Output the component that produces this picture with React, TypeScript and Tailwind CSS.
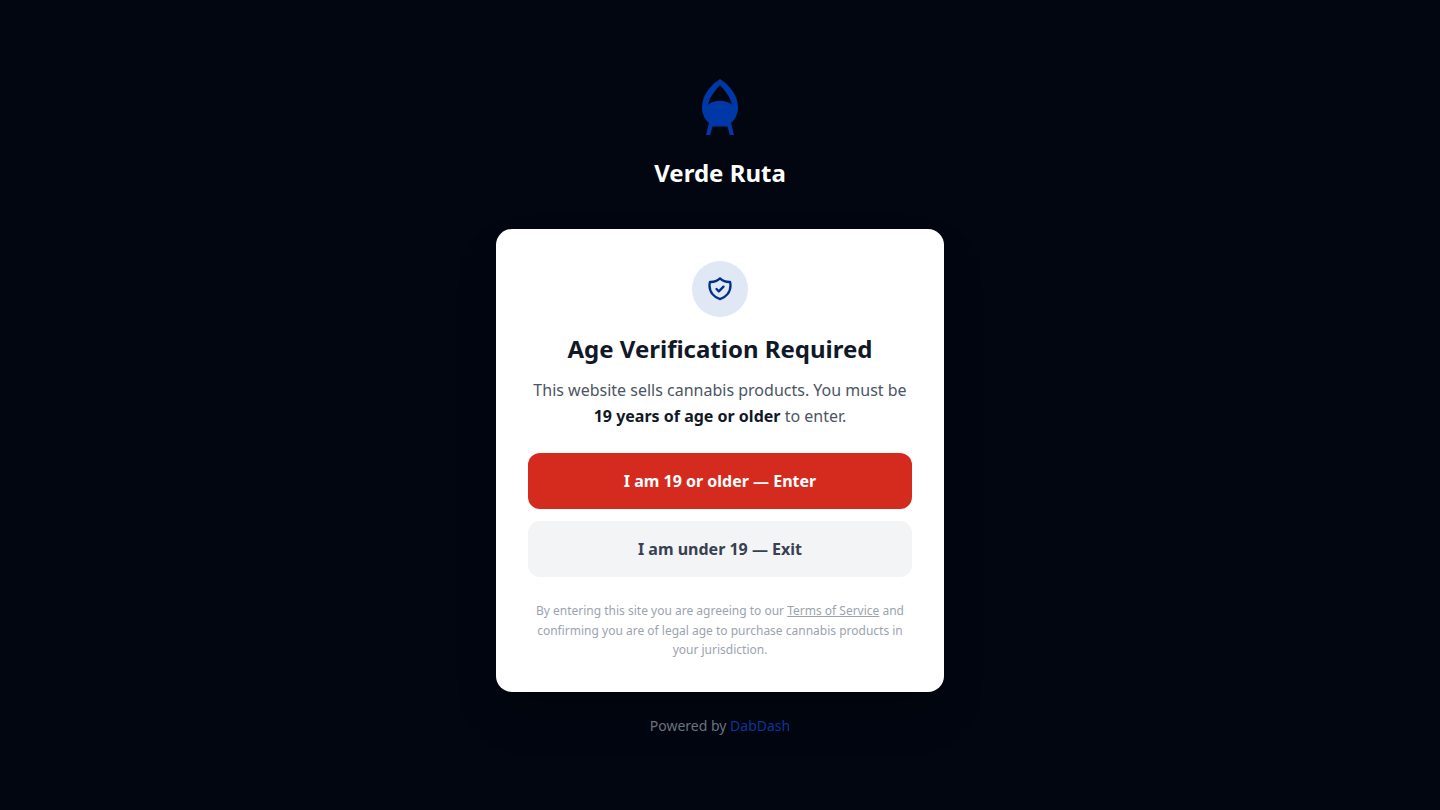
const LEGAL_AGE = 19;

function BrandLogo() {
  return (
    <svg
      className="w-16 h-16 mb-[19px] text-[#0038a8]"
      viewBox="0 0 64 64"
      fill="currentColor"
      aria-hidden="true"
    >
      <path
        fillRule="evenodd"
        d="M32 5C24 10 14 20.500 14 33.500c0 6.500 2.800 11.800 7 15.500l-3 12h4.200l2.200-8.500h15.200l2.200 8.500H46l-3-12c4.200-3.700 7-9 7-15.500C50 20.500 40 10 32 5zm0 6c-4.500 5-10.500 12.500-12 19.700 3.200-2.700 7.300-4 12-4s8.800 1.300 12 4C42.500 23.500 36.500 16 32 11z"
      />
    </svg>
  );
}

function ShieldCheckIcon() {
  return (
    <svg
      className="w-7 h-7 text-[#003087]"
      fill="none"
      stroke="currentColor"
      viewBox="0 0 24 24"
      aria-hidden="true"
    >
      <path
        strokeLinecap="round"
        strokeLinejoin="round"
        strokeWidth={2}
        d="M9 12l2 2 4-4m5.618-4.016A11.955 11.955 0 0112 2.944a11.955 11.955 0 01-8.618 3.040A12.020 12.020 0 003 9c0 5.591 3.824 10.290 9 11.622 5.176-1.332 9-6.030 9-11.622 0-1.042-.133-2.052-.382-3.016z"
      />
    </svg>
  );
}

export default function App() {
  return (
    <main className="min-h-screen bg-[#010610] flex flex-col items-center justify-center px-4 py-8 font-['Noto_Sans',sans-serif]">
      {/* Brand */}
      <div className="flex flex-col items-center mb-10">
        <BrandLogo />
        <p className="text-2xl font-bold text-white">Verde Ruta</p>
      </div>

      {/* Age gate card */}
      <section className="w-full max-w-md bg-white rounded-2xl shadow-2xl p-8 text-center">
        <div className="w-14 h-14 mx-auto mb-4 rounded-full bg-[#e0e7f5] flex items-center justify-center">
          <ShieldCheckIcon />
        </div>

        <h1 className="text-2xl font-bold text-[#111827] mb-3">
          Age Verification Required
        </h1>
        <p className="text-[#4b5563] leading-relaxed mb-6">
          This website sells cannabis products. You must be{" "}
          <strong className="font-bold text-[#111827]">
            {LEGAL_AGE} years of age or older
          </strong>{" "}
          to enter.
        </p>

        <div className="flex flex-col gap-3">
          <button
            type="button"
            className="w-full py-4 rounded-xl bg-[#d52b1e] hover:bg-[#b92217] text-white font-bold transition-colors"
          >
            I am {LEGAL_AGE} or older — Enter
          </button>
          <button
            type="button"
            className="w-full py-4 rounded-xl bg-[#f3f4f6] hover:bg-gray-200 text-[#374151] font-bold transition-colors"
          >
            I am under {LEGAL_AGE} — Exit
          </button>
        </div>

        <p className="mt-6 text-xs leading-relaxed text-[#9ca3af]">
          By entering this site you are agreeing to our{" "}
          <a href="#terms" className="underline hover:text-gray-600">
            Terms of Service
          </a>{" "}
          and confirming you are of legal age to purchase cannabis products in
          your jurisdiction.
        </p>
      </section>

      <p className="mt-6 text-sm text-[#6b7280]">
        Powered by{" "}
        <a href="#dabdash" className="text-[#0a3696] hover:underline">
          DabDash
        </a>
      </p>
    </main>
  );
}
